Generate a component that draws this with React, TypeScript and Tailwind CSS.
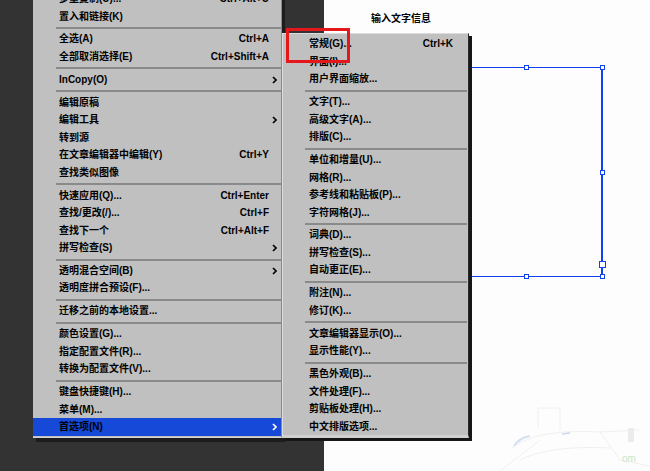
import React from "react";

type Item = { label?: string; sc?: string; arrow?: boolean; sep?: boolean; hl?: boolean };

const leftItems: Item[] = [
  { label: "多重复制(U)...", sc: "Ctrl+Alt+U" },
  { label: "置入和链接(K)" },
  { sep: true },
  { label: "全选(A)", sc: "Ctrl+A" },
  { label: "全部取消选择(E)", sc: "Ctrl+Shift+A" },
  { sep: true },
  { label: "InCopy(O)", arrow: true },
  { sep: true },
  { label: "编辑原稿" },
  { label: "编辑工具", arrow: true },
  { label: "转到源" },
  { label: "在文章编辑器中编辑(Y)", sc: "Ctrl+Y" },
  { label: "查找类似图像" },
  { sep: true },
  { label: "快速应用(Q)...", sc: "Ctrl+Enter" },
  { label: "查找/更改(/)...", sc: "Ctrl+F" },
  { label: "查找下一个", sc: "Ctrl+Alt+F" },
  { label: "拼写检查(S)", arrow: true },
  { sep: true },
  { label: "透明混合空间(B)", arrow: true },
  { label: "透明度拼合预设(F)..." },
  { sep: true },
  { label: "迁移之前的本地设置..." },
  { sep: true },
  { label: "颜色设置(G)..." },
  { label: "指定配置文件(R)..." },
  { label: "转换为配置文件(V)..." },
  { sep: true },
  { label: "键盘快捷键(H)..." },
  { label: "菜单(M)..." },
  { label: "首选项(N)", arrow: true, hl: true },
];

const subItems: Item[] = [
  { label: "常规(G)...", sc: "Ctrl+K" },
  { label: "界面(I)..." },
  { label: "用户界面缩放..." },
  { sep: true },
  { label: "文字(T)..." },
  { label: "高级文字(A)..." },
  { label: "排版(C)..." },
  { sep: true },
  { label: "单位和增量(U)..." },
  { label: "网格(R)..." },
  { label: "参考线和粘贴板(P)..." },
  { label: "字符网格(J)..." },
  { sep: true },
  { label: "词典(D)..." },
  { label: "拼写检查(S)..." },
  { label: "自动更正(E)..." },
  { sep: true },
  { label: "附注(N)..." },
  { label: "修订(K)..." },
  { sep: true },
  { label: "文章编辑器显示(O)..." },
  { label: "显示性能(Y)..." },
  { sep: true },
  { label: "黑色外观(B)..." },
  { label: "文件处理(F)..." },
  { label: "剪贴板处理(H)..." },
  { label: "中文排版选项..." },
];

function Arrow({ light }: { light?: boolean }) {
  return (
    <svg width="5" height="8" viewBox="0 0 5 8" className="block">
      <polyline points="1,1 4,4 1,7" fill="none" stroke={light ? "#ffffff" : "#000000"} strokeWidth="1.6" />
    </svg>
  );
}

const font = { fontFamily: '"Liberation Sans", "Noto Sans CJK SC", sans-serif' };

function LeftMenu() {
  return (
    <div className="absolute left-[33px] top-[-9.75px] w-[249px] bg-[#c0c0c0] border-r border-[#8a8a8a] border-b border-b-[#d4d4d4] shadow-[3px_4px_0_#1c1c1c] pb-[1px]">
      {leftItems.map((it, i) =>
        it.sep ? (
          <div key={i} className="h-[5.4px] flex items-center pl-[23px]">
            <div className="h-[2px] w-full bg-[#8a8a8a]" />
          </div>
        ) : (
          <div
            key={i}
            className={`h-[17.5px] flex items-center pl-[26px] pr-[4px] text-[10px] font-bold text-black ${it.hl ? "bg-[#1649d8]" : ""}`}
          >
            <span className="flex-1 whitespace-nowrap leading-none">{it.label}</span>
            {it.sc && <span className="whitespace-nowrap leading-none">{it.sc}</span>}
            <span className="w-[8px] flex justify-end">{it.arrow && <Arrow light={it.hl} />}</span>
          </div>
        )
      )}
    </div>
  );
}

function SubMenu() {
  return (
    <div className="absolute left-[282px] top-[33px] w-[187px] bg-[#c0c0c0] border-t border-l border-[#dcdcdc] border-r border-r-[#2a2a2a] border-b-[3px] border-b-[#d0d0d0] shadow-[3px_3px_0_#161616] pt-[1.5px]">
      {subItems.map((it, i) =>
        it.sep ? (
          <div key={i} className="h-[5.4px] flex items-center pl-[22px] pr-[1px]">
            <div className="h-[2px] w-full bg-[#8a8a8a]" />
          </div>
        ) : (
          <div key={i} className="h-[17.5px] flex items-center pl-[26px] pr-[15px] text-[10px] font-bold text-black">
            <span className="flex-1 whitespace-nowrap leading-none">{it.label}</span>
            {it.sc && <span className="whitespace-nowrap leading-none">{it.sc}</span>}
          </div>
        )
      )}
    </div>
  );
}

function Handle({ x, y, s = 5 }: { x: number; y: number; s?: number }) {
  return (
    <div
      className="absolute bg-white border border-[#1040f0]"
      style={{ left: x - s / 2, top: y - s / 2, width: s, height: s }}
    />
  );
}

export default function App() {
  return (
    <div className="relative w-[650px] h-[471px] overflow-hidden flex" style={font}>
      <div className="w-[324px] h-full bg-[#333333]" />
      <div className="flex-1 h-full bg-[#fdfdfd] relative">
        <div className="pl-[47px] pt-[14px] text-[10px] font-bold text-black leading-none">输入文字信息</div>
      </div>

      {/* canvas frame */}
      <div className="absolute left-[440px] top-[67px] w-[162px] h-[1px] bg-[#1040f0]" />
      <div className="absolute left-[440px] top-[276px] w-[162px] h-[1px] bg-[#1040f0]" />
      <div className="absolute left-[601px] top-[67px] w-[2px] h-[210px] bg-[#1040f0]" />
      <Handle x={526} y={67.5} />
      <Handle x={602} y={67.5} />
      <Handle x={602} y={172} />
      <Handle x={602} y={264.5} s={7} />
      <Handle x={526} y={276.5} />
      <Handle x={602} y={276.5} />

      {/* faint watermark */}
      <svg className="absolute left-[500px] top-[400px]" width="150" height="71" viewBox="0 0 150 71">
        <g fill="none" stroke="#f0f0f0" strokeWidth="1">
          <polyline points="38,8 60,8 60,30" />
          <polyline points="38,8 38,28" />
          <path d="M12,48 C30,34 60,30 100,32 L140,30" />
          <path d="M20,60 C40,50 70,46 110,48" />
          <polyline points="0,71 40,40" />
          <polyline points="100,32 120,60 150,66" />
        </g>
        <path d="M14,46 C18,40 24,37 30,36" stroke="#d4e0f2" strokeWidth="2" fill="none" />
        <path d="M62,34 L70,33" stroke="#ccd8ee" strokeWidth="1.5" fill="none" />
        <rect x="128" y="28" width="6" height="14" fill="#ebebeb" />
        <text x="122" y="62" fontSize="10" fill="#c8e6c8" fontFamily="Liberation Sans, sans-serif">om</text>
      </svg>

      <LeftMenu />
      <SubMenu />

      {/* red highlight box */}
      <div className="absolute left-[286px] top-[28px] w-[64px] h-[35px] border-[3px] border-[#e5161c]" />
    </div>
  );
}
